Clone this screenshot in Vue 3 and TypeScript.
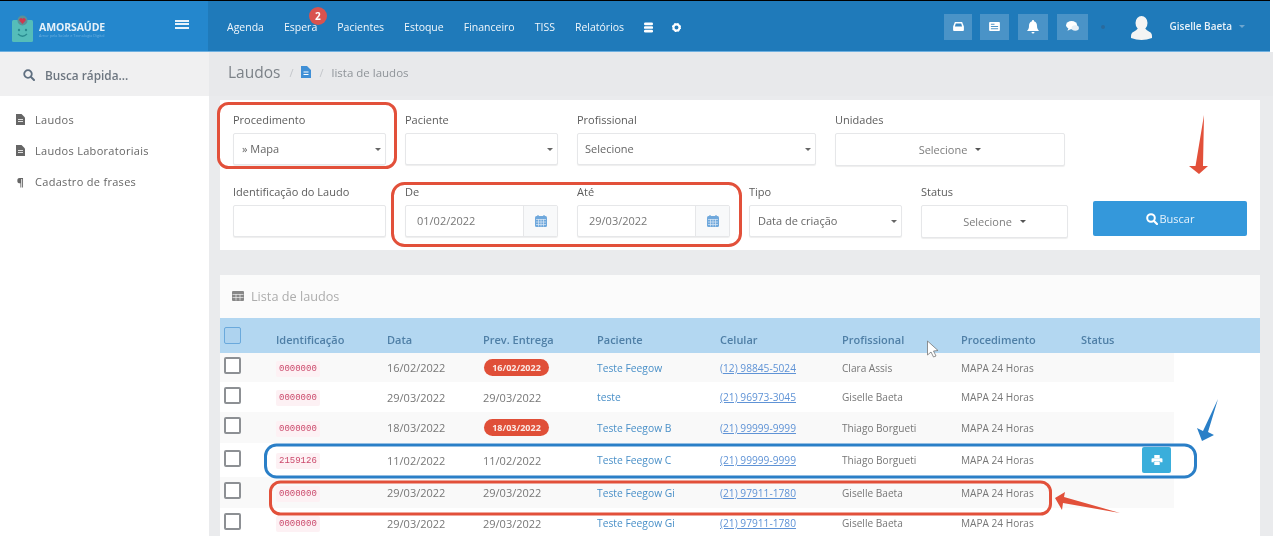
<script setup lang="ts">
interface Row {
  id: string
  data: string
  prev: string
  late: boolean
  paciente: string
  celular: string
  profissional: string
  size: string
  print?: boolean
}

const nav: string[] = ['Agenda', 'Espera', 'Pacientes', 'Estoque', 'Financeiro', 'TISS', 'Relatórios']
const side: string[] = ['Laudos', 'Laudos Laboratoriais']
const heads: string[] = ['Identificação', 'Data', 'Prev. Entrega', 'Paciente', 'Celular', 'Profissional', 'Procedimento', 'Status']
const rows: Row[] = [
  { id: '0000000', data: '16/02/2022', prev: '16/02/2022', late: true, paciente: 'Teste Feegow', celular: '(12) 98845-5024', profissional: 'Clara Assis', size: 'h29' },
  { id: '0000000', data: '29/03/2022', prev: '29/03/2022', late: false, paciente: 'teste', celular: '(21) 96973-3045', profissional: 'Giselle Baeta', size: 'h30' },
  { id: '0000000', data: '18/03/2022', prev: '18/03/2022', late: true, paciente: 'Teste Feegow B', celular: '(21) 99999-9999', profissional: 'Thiago Borgueti', size: 'h31' },
  { id: '2159126', data: '11/02/2022', prev: '11/02/2022', late: false, paciente: 'Teste Feegow C', celular: '(21) 99999-9999', profissional: 'Thiago Borgueti', size: 'h34', print: true },
  { id: '0000000', data: '29/03/2022', prev: '29/03/2022', late: false, paciente: 'Teste Feegow Gi', celular: '(21) 97911-1780', profissional: 'Giselle Baeta', size: 'h31' },
  { id: '0000000', data: '29/03/2022', prev: '29/03/2022', late: false, paciente: 'Teste Feegow Gi', celular: '(21) 97911-1780', profissional: 'Giselle Baeta', size: 'h30' },
]
</script>

<template>
  <div class="app">
    <header class="top">
      <div class="brand">
        <svg class="logo" width="22" height="27" viewBox="0 0 22 27">
          <rect x="0" y="5" width="21" height="22" rx="1.500" fill="#55bdb9" />
          <circle cx="10.500" cy="5.500" r="5" fill="#5a9098" />
          <path d="M10.500 9 L7.500 5.800 a1.700 1.700 0 0 1 3 -1.800 a1.700 1.700 0 0 1 3 1.800 Z" fill="#d0384e" />
          <circle cx="7" cy="15" r="1.200" fill="#2a8c90" />
          <circle cx="14" cy="15" r="1.200" fill="#2a8c90" />
          <path d="M6 19 Q10.500 23.500 15 19" stroke="#2a8c90" stroke-width="1.300" fill="none" />
        </svg>
        <div class="brand-text">
          <div class="brand-name">AMORSAÚDE</div>
          <div class="brand-sub">Amor pela Saúde e Tecnologia Digital</div>
        </div>
        <div class="burger"><i></i><i></i><i></i></div>
      </div>
      <nav class="nav">
        <a v-for="n in nav" :key="n" class="nav-item">
          {{ n }}<span v-if="n === 'Espera'" class="nav-badge">2</span>
        </a>
        <svg class="nav-icon" width="9" height="11" viewBox="0 0 10 12">
          <rect x="0" y="0.500" width="10" height="3" rx="1.400" fill="#fff" />
          <rect x="0" y="4.500" width="10" height="3" rx="1" fill="#fff" />
          <rect x="0" y="8.500" width="10" height="3" rx="1.400" fill="#fff" />
        </svg>
        <svg class="nav-icon cog" width="9" height="9" viewBox="0 0 10 10">
          <circle cx="5" cy="5" r="3.400" fill="none" stroke="#fff" stroke-width="2.400" />
          <circle cx="5" cy="5" r="4.500" fill="none" stroke="#fff" stroke-width="1.200" stroke-dasharray="1.600 2" />
        </svg>
      </nav>
      <div class="tools">
        <span class="tool t1">
          <svg width="11" height="9" viewBox="0 0 12 10"><path d="M2 0 H10 L12 5 V9 a1 1 0 0 1 -1 1 H1 a1 1 0 0 1 -1 -1 V5 Z" fill="#fff" /><path d="M3 1.600 H9 L10 5 H2 Z" fill="#3b89c2" /></svg>
        </span>
        <span class="tool t2">
          <svg width="11" height="9" viewBox="0 0 12 10"><rect width="12" height="10" rx="1" fill="#fff" /><path d="M2 2.500 H6 M2 5 H10 M2 7.500 H10" stroke="#3b89c2" stroke-width="1" /></svg>
        </span>
        <span class="tool t3">
          <svg width="12" height="14" viewBox="0 0 12 14"><path d="M6 0 a1 1 0 0 1 1 1.200 C9.500 2 10 4 10 6 C10 8.500 11 9.500 12 11 H0 C1 9.500 2 8.500 2 6 C2 4 2.500 2 5 1.200 A1 1 0 0 1 6 0 Z M4.500 12 H7.500 A1.500 1.500 0 0 1 4.500 12 Z" fill="#fff" /></svg>
        </span>
        <span class="tool t4">
          <svg width="13" height="11" viewBox="0 0 14 12"><ellipse cx="6" cy="4.500" rx="6" ry="4.500" fill="#fff" /><path d="M3 7 L1.500 10.500 L6 8.500 Z" fill="#fff" /><ellipse cx="10" cy="7.500" rx="4" ry="3" fill="#e6eff6" /></svg>
        </span>
        <span class="dot"></span>
        <svg class="avatar" width="21" height="24" viewBox="0 0 21 24">
          <ellipse cx="10.500" cy="7" rx="6" ry="7" fill="#f4f4f4" />
          <path d="M7 12 C5 16 0 15 0 20 V22 Q10.500 26 21 22 V20 C21 15 16 16 14 12 Z" fill="#f4f4f4" />
        </svg>
        <span class="user">Giselle Baeta</span>
        <span class="user-caret"></span>
      </div>
    </header>

    <div class="body">
      <aside class="sidebar">
        <div class="quick">
          <svg width="12" height="12" viewBox="0 0 12 12"><circle cx="5" cy="5" r="3.800" fill="none" stroke="#5f6f80" stroke-width="1.800" /><path d="M8 8 L11 11" stroke="#5f6f80" stroke-width="2" stroke-linecap="round" /></svg>
          <span>Busca rápida...</span>
        </div>
        <ul class="menu">
          <li v-for="s in side" :key="s">
            <svg class="menu-icon" width="9" height="11" viewBox="0 0 9 11"><path d="M0 0 H5.500 L9 3.500 V11 H0 Z" fill="#666" /><path d="M2 5.500 H7 M2 7.500 H7" stroke="#fff" stroke-width="0.800" /></svg>
            <span>{{ s }}</span>
          </li>
          <li>
            <span class="menu-icon pil">¶</span>
            <span>Cadastro de frases</span>
          </li>
        </ul>
      </aside>

      <main class="main">
        <div class="crumb">
          <span class="crumb-title">Laudos</span>
          <span class="sep">/</span>
          <svg width="10" height="12" viewBox="0 0 10 12"><path d="M0 0 H6 L10 4 V12 H0 Z" fill="#3f8fd6" /><path d="M2.500 6 H7.500 M2.500 8.500 H7.500" stroke="#fff" stroke-width="1" /></svg>
          <span class="sep">/</span>
          <span class="crumb-sub">lista de laudos</span>
        </div>

        <section class="panel filters">
          <div class="row one">
            <div class="field w153">
              <label>Procedimento</label>
              <div class="control select s1">» Mapa</div>
            </div>
            <div class="field w153">
              <label>Paciente</label>
              <div class="control select"></div>
            </div>
            <div class="field w239">
              <label>Profissional</label>
              <div class="control select">Selecione</div>
            </div>
            <div class="field w230">
              <label>Unidades</label>
              <div class="control multi">Selecione <b class="mini-caret"></b></div>
            </div>
          </div>
          <div class="row two">
            <div class="field w153">
              <label>Identificação do Laudo</label>
              <div class="control"></div>
            </div>
            <div v-for="d in [{ l: 'De', v: '01/02/2022' }, { l: 'Até', v: '29/03/2022' }]" :key="d.l" class="field w153">
              <label>{{ d.l }}</label>
              <div class="control date">
                <span class="date-val">{{ d.v }}</span>
                <span class="addon">
                  <svg width="12" height="12" viewBox="0 0 12 12"><rect y="1" width="12" height="11" rx="1.500" fill="#6fa8dc" /><path d="M1 4.500 H11 M1 7 H11 M1 9.500 H11 M3.500 4 V11.500 M6 4 V11.500 M8.500 4 V11.500" stroke="#dbe8f5" stroke-width="0.700" /><path d="M3 0 V2 M9 0 V2" stroke="#6fa8dc" stroke-width="1.200" /></svg>
                </span>
              </div>
            </div>
            <div class="field w153">
              <label>Tipo</label>
              <div class="control select t">Data de criação</div>
            </div>
            <div class="field w147">
              <label>Status</label>
              <div class="control multi">Selecione <b class="mini-caret"></b></div>
            </div>
            <button class="search" type="button">
              <svg width="12" height="12" viewBox="0 0 12 12"><circle cx="5" cy="5" r="3.800" fill="none" stroke="#fff" stroke-width="2" /><path d="M8 8 L11 11" stroke="#fff" stroke-width="2.200" stroke-linecap="round" /></svg>
              Buscar
            </button>
          </div>
        </section>

        <section class="panel list">
          <div class="list-title">
            <svg width="12" height="10" viewBox="0 0 12 10"><rect width="12" height="10" rx="1" fill="#888" /><path d="M0.500 3.500 H11.500 M0.500 6.500 H11.500 M4 3 V9.500 M8 3 V9.500" stroke="#eee" stroke-width="0.700" /></svg>
            <span>Lista de laudos</span>
          </div>
          <div class="thead grid">
            <span class="cb head-cb"></span>
            <span v-for="h in heads" :key="h" class="th">{{ h }}</span>
          </div>
          <div
            v-for="(r, i) in rows"
            :key="i"
            class="trow grid"
            :class="[i % 2 === 0 ? 'odd' : '', r.size]"
          >
            <span class="cb"></span>
            <span><code class="code">{{ r.id }}</code></span>
            <span>{{ r.data }}</span>
            <span><em v-if="r.late" class="pill">{{ r.prev }}</em><template v-else>{{ r.prev }}</template></span>
            <span class="link">{{ r.paciente }}</span>
            <span class="phone">{{ r.celular }}</span>
            <span class="small">{{ r.profissional }}</span>
            <span class="small">MAPA 24 Horas</span>
            <span class="last">
              <button v-if="r.print" class="print" type="button">
                <svg width="12" height="10" viewBox="0 0 12 11"><path d="M3 0 H9 V3.500 H3 Z" fill="#fff" /><path d="M1 3.500 H11 a1 1 0 0 1 1 1 V8 H9.500 V6.500 H2.500 V8 H0 V4.500 a1 1 0 0 1 1 -1 Z" fill="#fff" /><path d="M3 7 H9 V11 H3 Z" fill="#fff" /></svg>
              </button>
            </span>
          </div>
        </section>
      </main>
    </div>

    <svg class="marks" width="1273" height="536" viewBox="0 0 1273 536">
      <g fill="none" stroke="#e2503a" stroke-width="3">
        <rect x="218.500" y="103.500" width="177" height="64" rx="10" />
        <rect x="392.500" y="183.500" width="348" height="62" rx="12" />
        <rect x="270.500" y="482" width="780" height="32" rx="10" />
      </g>
      <rect x="265.500" y="445" width="930" height="32" rx="11" fill="none" stroke="#2a7fc7" stroke-width="3" />
      <path d="M1204 115 L1195.500 166 H1189 L1199 174 L1208 166 H1203 Z" fill="#e2503a" />
      <path d="M1218 399 L1203 431 L1197 428 L1202 441 L1214 435 L1208 432 Z" fill="#2a7fc7" />
      <path d="M1055 498 L1065 492 L1064 497 L1120 513 L1063 503 L1062 510 Z" fill="#e2503a" />
      <path d="M927.500 341 V355 L931 352 L933.500 357 L936 356 L933.500 351 L938 350.500 Z" fill="#fff" stroke="#777" stroke-width="0.800" />
    </svg>
  </div>
</template>

<style>
html,
body {
  margin: 0;
  padding: 0;
  overflow: hidden;
  background: #fff;
}
</style>

<style scoped>
.app {
  position: relative;
  width: 1273px;
  height: 536px;
  overflow: hidden;
  background: #fff;
  font-family: 'Open Sans', 'Noto Sans', sans-serif;
  font-size: 11px;
  color: #666;
  filter: blur(0.6px);
}

.top {
  display: flex;
  height: 52px;
  box-sizing: border-box;
  border-top: 1px solid #000;
  border-bottom: 1px solid #6eb0e0;
  background: #1f7aba;
  margin-right: 3px;
}

.brand {
  display: flex;
  align-items: center;
  width: 208px;
  flex: none;
  box-sizing: border-box;
  padding: 5px 0 0 12px;
  background: #2487cd;
}

.logo {
  flex: none;
  margin-right: 5px;
}

.brand-name {
  color: #e6f1f9;
  font-size: 10.500px;
  font-weight: 700;
  line-height: 11px;
  letter-spacing: -0.1px;
}

.brand-sub {
  color: #6cb0e0;
  font-size: 3.800px;
  line-height: 5px;
  white-space: nowrap;
}

.brand-text {
  width: 70px;
  margin-top: 3px;
}

.burger {
  display: flex;
  flex-direction: column;
  gap: 1.500px;
  margin: -9px 0 0 66px;
}

.burger i {
  display: block;
  width: 14px;
  height: 2px;
  background: #e8f2fa;
}

.nav {
  display: flex;
  align-items: center;
  gap: 20px;
  padding: 2px 0 0 19px;
  color: #f0f6fb;
  font-size: 10.500px;
}

.nav-item {
  position: relative;
  white-space: nowrap;
}

.nav-badge {
  position: absolute;
  left: 25px;
  top: -13px;
  width: 18px;
  height: 18px;
  border-radius: 50%;
  background: #d9534f;
  color: #fff;
  font-size: 10px;
  font-weight: 700;
  line-height: 18px;
  text-align: center;
}

.nav-icon {
  flex: none;
}

.nav-icon.cog {
  margin-left: -1px;
}

.tools {
  display: flex;
  align-items: center;
  margin-left: auto;
  padding-right: 25px;
}

.tool {
  display: flex;
  align-items: center;
  justify-content: center;
  height: 26px;
  margin-top: 1px;
  background: #4a93c7;
}

.t1 {
  width: 28px;
  margin-right: 8px;
}

.t2 {
  width: 29px;
  margin-right: 9px;
}

.t3 {
  width: 30px;
  margin-right: 9px;
}

.t4 {
  width: 31px;
}

.dot {
  width: 4px;
  height: 4px;
  margin: 2px 26px 0 13px;
  border-radius: 50%;
  background: #2a6a9c;
}

.avatar {
  flex: none;
  margin-top: 3px;
}

.user {
  margin-left: 17px;
  color: #e8f1f8;
  font-size: 10px;
  font-weight: 600;
  white-space: nowrap;
}

.user-caret {
  width: 0;
  height: 0;
  margin-left: 7px;
  border-top: 3px solid #6ea6cf;
  border-left: 3px solid transparent;
  border-right: 3px solid transparent;
}

.body {
  display: flex;
  height: 484px;
}

.sidebar {
  flex: none;
  width: 209px;
  background: #fff;
}

.quick {
  display: flex;
  align-items: center;
  gap: 10px;
  box-sizing: border-box;
  height: 44px;
  padding: 2px 0 0 23px;
  background: #f0f0f1;
  color: #6d7680;
  font-size: 11.800px;
  font-weight: 600;
}

.menu {
  list-style: none;
  margin: 8px 0 0;
  padding: 0;
}

.menu li {
  display: flex;
  align-items: center;
  height: 31px;
  padding-left: 16px;
  color: #666;
  font-size: 11px;
  letter-spacing: 0.3px;
}

.menu-icon {
  flex: none;
  width: 9px;
  margin-right: 10px;
}

.pil {
  font-size: 11px;
  font-weight: 700;
  text-align: center;
}

.main {
  flex: 1;
  min-width: 0;
  background: #eaebed;
}

.crumb {
  display: flex;
  align-items: center;
  gap: 8px;
  box-sizing: border-box;
  height: 44px;
  padding: 0 0 4px 19px;
  background: #e8e9eb;
  color: #a9adb2;
}

.crumb-title {
  margin-right: 1px;
  color: #7c8288;
  font-size: 15.500px;
}

.sep {
  color: #c3c6ca;
}

.crumb-sub {
  color: #8f9499;
  font-size: 11.500px;
}

.panel {
  background: #fff;
  margin: 4px 13px 0 11px;
}

.filters {
  box-sizing: border-box;
  height: 150px;
  padding: 12px 13px 0;
}

.row {
  display: flex;
  gap: 19px;
}

.row.two {
  margin-top: 18px;
}

.field label {
  display: block;
  margin-bottom: 5px;
  color: #5c5c5c;
  font-size: 11px;
  line-height: 16px;
  white-space: nowrap;
}

.w153 {
  width: 153px;
}

.w239 {
  width: 239px;
}

.w230 {
  width: 230px;
}

.w147 {
  width: 147px;
}

.control {
  position: relative;
  display: flex;
  align-items: center;
  box-sizing: border-box;
  height: 32px;
  padding: 0 0 2px 7px;
  border: 1px solid #e6e7e9;
  border-radius: 2px;
  box-shadow: 0 1px 1px #eeeeee;
  background: #fff;
  color: #666;
  font-size: 11px;
}

.select::after {
  content: '';
  position: absolute;
  right: 4px;
  top: 14px;
  border-top: 3.500px solid #666;
  border-left: 3px solid transparent;
  border-right: 3px solid transparent;
}

.s1,
.t {
  padding-left: 8px;
}

.multi {
  justify-content: center;
  gap: 4px;
  height: 33px;
  padding: 0 0 1px;
  color: #7d7d7d;
}

.mini-caret {
  width: 0;
  height: 0;
  margin: 1px 0 0 4px;
  border-top: 3px solid #555;
  border-left: 3px solid transparent;
  border-right: 3px solid transparent;
}

.date {
  padding: 0;
}

.date-val {
  flex: 1;
  padding: 0 0 1px 11px;
  color: #777;
}

.addon {
  display: flex;
  align-items: center;
  justify-content: center;
  flex: none;
  width: 33px;
  height: 100%;
  border-left: 1px solid #e6e7e9;
  background: #f8f9fa;
}

.search {
  display: flex;
  align-items: center;
  justify-content: center;
  gap: 2px;
  width: 154px;
  height: 35px;
  margin: 17px 0 0 6px;
  padding: 0;
  border: 0;
  border-radius: 2px;
  background: #3498db;
  color: #e6f2fb;
  font: 11px 'Open Sans', 'Noto Sans', sans-serif;
}

.list {
  margin-top: 25px;
  height: 261px;
}

.list-title {
  display: flex;
  align-items: center;
  gap: 7px;
  box-sizing: border-box;
  height: 43px;
  padding: 0 0 2px 12px;
  background: #fbfbfb;
  color: #adadad;
  font-size: 12.700px;
}

.grid {
  display: grid;
  grid-template-columns: 56px 111px 96px 114px 123px 122px 119px 120px 93px;
  align-items: center;
  white-space: nowrap;
}

.thead {
  height: 35px;
  background: #b3d7f1;
  color: #4f7fa6;
  font-size: 11px;
  font-weight: 600;
}

.th {
  padding-top: 8px;
}

.trow {
  width: 954px;
  color: #777;
  font-size: 11px;
  background: #fff;
}

.trow.odd {
  background: #f9f9f9;
}

.h29 {
  height: 29px;
}

.h30 {
  height: 30px;
}

.h31 {
  height: 31px;
}

.h34 {
  height: 34px;
}

.cb {
  display: block;
  box-sizing: border-box;
  width: 17px;
  height: 17px;
  margin: 0 0 4px 4px;
  border: 2px solid #8d9094;
  border-radius: 2px;
  background: #fff;
}

.head-cb {
  margin-bottom: 0;
  border: 1.500px solid #6aa9dc;
  background: #aed3ef;
}

.code {
  display: inline-block;
  padding: 2px 3px;
  border-radius: 2px;
  background: #fdf1f4;
  color: #cb4a6c;
  font: 9px/12px 'Liberation Mono', monospace;
}

.pill {
  display: inline-block;
  box-sizing: border-box;
  width: 65px;
  height: 17px;
  margin-left: 1px;
  border-radius: 9px;
  background: #e04f38;
  color: #fbe9e5;
  font-size: 9px;
  font-style: normal;
  font-weight: 700;
  line-height: 17px;
  text-align: center;
}

.link {
  color: #4a90c8;
  font-size: 10.300px;
}

.phone {
  color: #5f93d6;
  font-size: 10.200px;
  text-decoration: underline;
}

.small {
  font-size: 10.100px;
}

.last {
  position: relative;
}

.print {
  display: flex;
  align-items: center;
  justify-content: center;
  width: 29px;
  height: 26px;
  margin-left: 61px;
  padding: 0;
  border: 0;
  border-radius: 2px;
  background: #3aaedb;
}

.marks {
  position: absolute;
  left: 0;
  top: 0;
  pointer-events: none;
}
</style>
